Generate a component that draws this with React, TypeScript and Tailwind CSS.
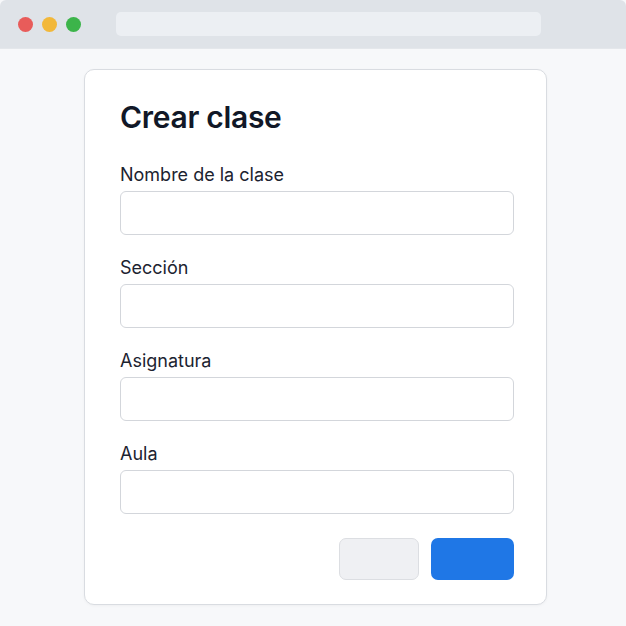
import React from "react";

const fields = ["Nombre de la clase", "Sección", "Asignatura", "Aula"];

function Field({ label }: { label: string }) {
  return (
    <div className="flex flex-col gap-[4px]">
      <label className="text-[18px] leading-[24px] text-[#1c2330]">{label}</label>
      <input
        type="text"
        className="h-[44px] w-full rounded-[6px] border border-[#d3d6db] bg-white px-3 outline-none"
      />
    </div>
  );
}

export default function App() {
  return (
    <div
      className="flex h-[626px] w-[626px] flex-col bg-[#f7f8fa]"
      style={{ fontFamily: "Inter, 'Noto Sans', sans-serif" }}
    >
      <div className="flex h-[49px] shrink-0 items-center rounded-t-[6px] border-b border-[#e4e7eb] bg-[#dfe3e8] pl-[18px] pr-[85px]">
        <div className="flex gap-[9px]">
          <span className="h-[15px] w-[15px] rounded-full bg-[#e85c5a]" />
          <span className="h-[15px] w-[15px] rounded-full bg-[#f2b83a]" />
          <span className="h-[15px] w-[15px] rounded-full bg-[#3cb44a]" />
        </div>
        <div className="ml-[35px] h-[24px] flex-1 rounded-[5px] bg-[#eceff3]" />
      </div>

      <div className="flex justify-center pt-[20px] pl-[84px] pr-[79px]">
        <div className="flex h-[536px] w-full flex-col rounded-[10px] border border-[#d9dce1] bg-white pt-[29px] pl-[35px] pr-[32px] pb-[24px] shadow-[0_1px_3px_rgba(0,0,0,0.04)]">
          <h1 className="text-[30px] font-semibold leading-[36px] tracking-[-0.3px] text-[#111827]">
            Crear clase
          </h1>
          <div className="mt-[28px] flex flex-col gap-[21px]">
            {fields.map((f) => (
              <Field key={f} label={f} />
            ))}
          </div>
          <div className="mt-auto flex justify-end gap-[12px]">
            <button className="h-[42px] w-[80px] rounded-[7px] border border-[#dcdee2] bg-[#eff0f3]" />
            <button className="h-[42px] w-[83px] rounded-[7px] bg-[#1f77e6]" />
          </div>
        </div>
      </div>
    </div>
  );
}
